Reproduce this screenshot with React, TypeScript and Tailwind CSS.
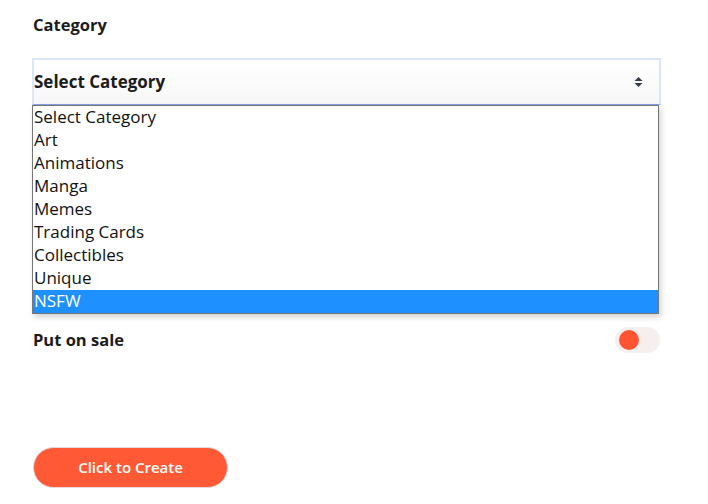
import React from "react";

const items = [
  "Select Category",
  "Art",
  "Animations",
  "Manga",
  "Memes",
  "Trading Cards",
  "Collectibles",
  "Unique",
  "NSFW",
];

export default function App() {
  return (
    <div
      className="w-[708px] h-[504px] bg-white overflow-hidden pl-[33px] pt-[15px] text-[#1c1c1c]"
      style={{ fontFamily: "'Open Sans', Lato, sans-serif" }}
    >
      <div className="text-[16.5px] leading-[20px] font-bold">Category</div>
      <div className="relative mt-[23px] w-[627px]">
        <div className="h-[47px] -ml-[1px] w-[629px] flex items-center justify-between pl-[0px] pr-[16px] border-2 border-[#dbe5fb] border-b-[#86a2e6] border-b bg-gradient-to-b from-white to-[#f7f7f7]">
          <span className="text-[17px] font-bold text-[#1c1c1c]">Select Category</span>
          <svg width="9" height="12" viewBox="0 0 9 12">
            <path d="M4.5 1 L8.5 5 H0.5 Z" fill="#333a4a" />
            <path d="M4.5 11 L8.5 7 H0.5 Z" fill="#333a4a" />
          </svg>
        </div>
        <div className="absolute left-[-1px] top-[47px] w-[627px] h-[209px] bg-white border border-[#767676] shadow-[2px_3px_6px_rgba(0,0,0,0.18)] z-10">
          {items.map((it, i) => (
            <div
              key={it}
              className={
                "h-[23px] leading-[22px] pl-[1px] text-[17px] " +
                (i === items.length - 1 ? "bg-[#1e90ff] text-white" : "text-[#111]")
              }
            >
              {it}
            </div>
          ))}
        </div>
      </div>
      <div className="mt-[222px] w-[627px] flex items-center justify-between">
        <span className="text-[16.5px] font-bold leading-[26px]">Put on sale</span>
        <div className="w-[45px] h-[26px] rounded-full bg-[#f5efed] flex items-center pl-[4px]">
          <div className="w-[20px] h-[20px] rounded-full bg-[#ff5533]" />
        </div>
      </div>
      <button className="mt-[94px] w-[195px] h-[41px] rounded-full bg-[#ff5a35] border border-[#e8d6dc] text-white text-[15px] font-semibold flex items-center justify-center">
        Click to Create
      </button>
    </div>
  );
}
